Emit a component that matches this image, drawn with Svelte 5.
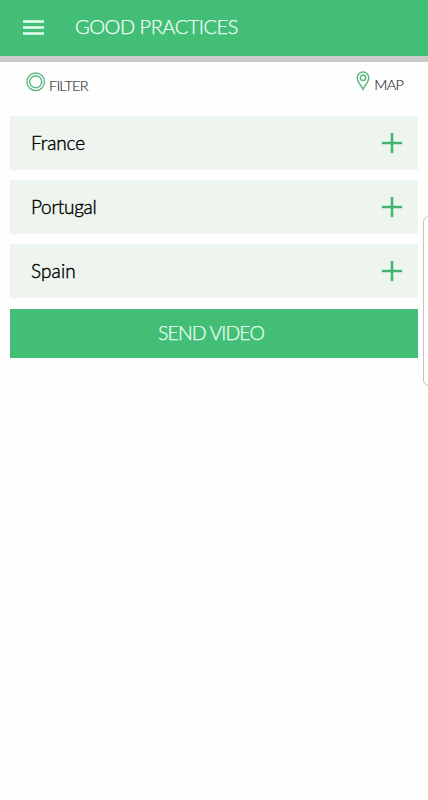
<script>
  const countries = [
    { name: 'France', spacing: -0.1 },
    { name: 'Portugal', spacing: -0.3 },
    { name: 'Spain', spacing: 0.1 }
  ];
</script>

<div class="screen">
  <header>
    <button class="menu" aria-label="Menu">
      <svg width="21" height="15" viewBox="0 0 21 15">
        <path d="M0 1.5h21M0 7.5h21M0 13.5h21" stroke="#e6fff2" stroke-width="2.3" />
      </svg>
    </button>
    <h1>GOOD PRACTICES</h1>
  </header>

  <nav>
    <button class="tool">
      <svg class="ring" width="20" height="20" viewBox="0 0 20 20" fill="none" stroke="#60b882">
        <circle cx="9.7" cy="9.8" r="8.8" stroke-width="1.4" />
        <circle cx="9.7" cy="9.8" r="6" stroke-width="1.5" />
      </svg>
      <span class="filter">FILTER</span>
    </button>
    <button class="tool">
      <svg class="pin" width="14" height="20" viewBox="0 0 14 20" fill="none" stroke="#58b57c" stroke-width="1.4">
        <path d="M7 18.3C5.4 14.6 1.2 11 1.2 6.8a5.8 5.8 0 0 1 11.6 0C12.8 11 8.6 14.6 7 18.3z" />
        <circle cx="7" cy="6.7" r="2.7" />
      </svg>
      <span class="map">MAP</span>
    </button>
  </nav>

  <main>
    {#each countries as country}
      <button class="row">
        <span style:letter-spacing="{country.spacing}px">{country.name}</span>
        <svg width="20" height="20" viewBox="0 0 20 20">
          <path d="M0 10h20M10 0v20" stroke="#42b574" stroke-width="2.6" />
        </svg>
      </button>
    {/each}
    <button class="send"><span>SEND VIDEO</span></button>
  </main>

  <div class="edge"></div>
</div>

<style>
  :global(body) {
    margin: 0;
    background: #fff;
  }
  .screen {
    position: relative;
    height: 800px;
    overflow: hidden;
    background: #fefefe;
    font-family: Lato, 'Open Sans', sans-serif;
    font-weight: 300;
  }
  button {
    margin: 0;
    padding: 0;
    border: 0;
    background: none;
    font: inherit;
    color: inherit;
  }
  svg {
    display: block;
    flex: none;
  }
  header {
    box-sizing: border-box;
    height: 62px;
    padding-left: 23px;
    border-bottom: 6px solid #cbcbcb;
    background: #43be76;
    display: flex;
    align-items: center;
    gap: 31px;
  }
  .menu {
    margin-top: -2px;
  }
  h1 {
    margin: -4px 0 0;
    font-size: 20px;
    line-height: 24px;
    font-weight: 300;
    letter-spacing: -0.48px;
    -webkit-text-stroke: 0.25px;
    color: #f2fff8;
    white-space: nowrap;
  }
  nav {
    box-sizing: border-box;
    height: 54px;
    padding: 10px 25px 0 26px;
    display: flex;
    justify-content: space-between;
    align-items: flex-start;
    color: #2d2d2d;
    font-size: 14.5px;
    line-height: 18px;
  }
  .tool {
    display: flex;
    align-items: flex-start;
    gap: 3px;
    -webkit-text-stroke: 0.15px;
  }
  .tool span {
    margin-top: 5px;
  }
  .filter {
    letter-spacing: -0.8px;
  }
  .pin {
    margin-top: -1px;
    margin-right: 1px;
  }
  .tool .map {
    margin-top: 4px;
    letter-spacing: -0.8px;
  }
  main {
    padding: 0 10px;
    display: flex;
    flex-direction: column;
  }
  .row {
    box-sizing: border-box;
    height: 54px;
    margin-bottom: 10.2px;
    padding: 0 16px 0 21px;
    background: #eef5ef;
    color: #000;
    display: flex;
    align-items: center;
    justify-content: space-between;
    font-size: 19px;
    font-weight: 300;
    -webkit-text-stroke: 0.4px;
  }
  .row span {
    margin-top: -1px;
  }
  .send {
    height: 49px;
    padding-right: 6px;
    background: #43be76;
    color: #eafff3;
    font-size: 19.5px;
    letter-spacing: -0.9px;
    -webkit-text-stroke: 0.25px;
    display: flex;
    align-items: center;
    justify-content: center;
  }
  .send span {
    margin-top: -2px;
  }
  .edge {
    position: absolute;
    box-sizing: border-box;
    left: 423px;
    top: 216px;
    width: 12px;
    height: 170px;
    border: 1px solid #c4c4c4;
    border-radius: 6px;
    background: #fff;
  }
</style>
